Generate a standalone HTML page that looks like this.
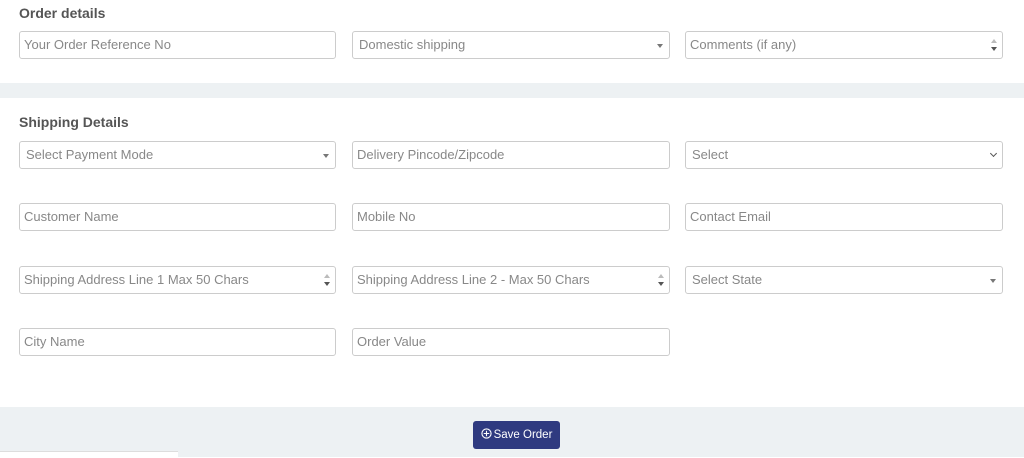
<!DOCTYPE html>
<html><head><style>
body{margin:0;width:1024px;height:457px;background:#fff;font-family:"Liberation Sans",sans-serif;position:relative;overflow:hidden}
.h{position:absolute;left:19px;font-size:14px;font-weight:bold;color:#555}
.f{position:absolute;box-sizing:border-box;height:28px;border:1px solid #ccc;border-radius:3px;background:#fff;font-size:13px;color:#888;line-height:26px;padding-left:4px}
.c1{left:19px;width:317px}.c2{left:352px;width:318px}.c3{left:685px;width:318px}
.sel{padding-left:6px}
.sel:after{content:"";position:absolute;right:6px;top:12px;border:3.5px solid transparent;border-top:4px solid #777}
.sp:after{content:"";position:absolute;right:5px;top:4px;border:3px solid transparent;border-bottom:4px solid #bbb}
.sp:before{content:"";position:absolute;right:5px;top:15px;border:3px solid transparent;border-top:4px solid #555}
.chev{position:absolute;right:6px;top:9px;width:4px;height:4px;border-right:1.5px solid #555;border-bottom:1.5px solid #555;transform:rotate(45deg)}
</style></head><body>
<div class="h" style="top:5px">Order details</div>
<div class="f c1" style="top:31px">Your Order Reference No</div>
<div class="f c2 sel" style="top:31px">Domestic shipping</div>
<div class="f c3 sp" style="top:31px">Comments (if any)</div>
<div style="position:absolute;left:0;top:83px;width:1024px;height:15px;background:#edf1f3"></div>
<div class="h" style="top:114px">Shipping Details</div>
<div class="f c1 sel" style="top:141px">Select Payment Mode</div>
<div class="f c2" style="top:141px">Delivery Pincode/Zipcode</div>
<div class="f c3" style="top:141px;padding-left:6px">Select<span class="chev"></span></div>
<div class="f c1" style="top:203px">Customer Name</div>
<div class="f c2" style="top:203px">Mobile No</div>
<div class="f c3" style="top:203px">Contact Email</div>
<div class="f c1 sp" style="top:266px">Shipping Address Line 1 Max 50 Chars</div>
<div class="f c2 sp" style="top:266px">Shipping Address Line 2 - Max 50 Chars</div>
<div class="f c3 sel" style="top:266px">Select State</div>
<div class="f c1" style="top:328px">City Name</div>
<div class="f c2" style="top:328px">Order Value</div>
<div style="position:absolute;left:0;top:407px;width:1024px;height:50px;background:#edf1f3"></div>
<div style="position:absolute;left:0;top:451px;width:178px;height:6px;background:#fff;border-top:1px solid #ddd"></div>
<div style="position:absolute;left:473px;top:421px;width:87px;height:28px;background:#2f3a80;border-radius:3px;color:#fff;font-size:11.5px;line-height:28px;text-align:center">
<svg width="11" height="11" viewBox="0 0 12 12" style="vertical-align:-1px;margin-right:2px"><circle cx="6" cy="6" r="5" fill="none" stroke="#fff" stroke-width="1.2"/><path d="M6 3v6M3 6h6" stroke="#fff" stroke-width="1.2"/></svg>Save Order</div>
</body></html>
